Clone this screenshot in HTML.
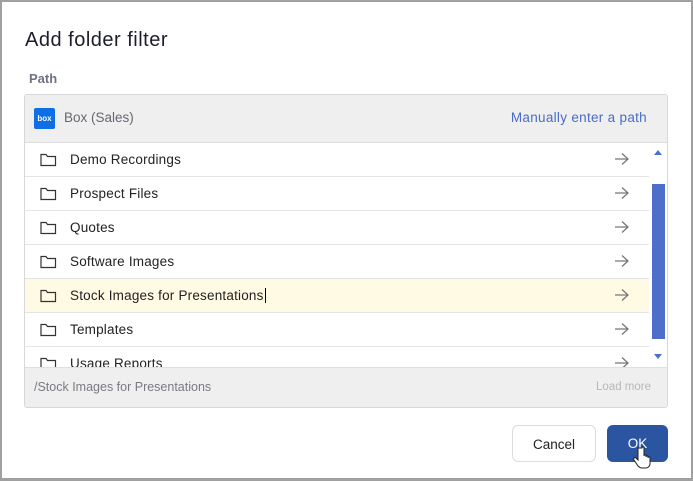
<!DOCTYPE html>
<html><head><style>
*{box-sizing:border-box;margin:0;padding:0}
body{width:693px;height:481px;background:#fff;font-family:"Liberation Sans",sans-serif;position:relative;overflow:hidden;border:2px solid #a0a0a0;border-bottom-width:3px}
.title{position:absolute;left:23px;top:27px;font-size:20px;color:#1d1d2b;letter-spacing:0.5px}
.path{position:absolute;left:27px;top:69px;font-size:13px;color:#6e7383;font-weight:bold}
.panel{position:absolute;left:22px;top:92px;width:644px;height:314px;border:1px solid #d8d8d8;border-radius:3px;overflow:hidden;background:#fff}
.hdr{height:48px;background:#efefef;border-bottom:1px solid #dedede;position:relative}
.logo{position:absolute;left:9px;top:13px;width:21px;height:21px;background:#0f6ee6;border-radius:2px;color:#fff;font-size:8px;text-align:center;line-height:21px;font-weight:bold}
.hname{position:absolute;left:39px;top:15px;font-size:13.5px;color:#666670}
.man{position:absolute;right:20px;top:15px;font-size:13.5px;color:#4a6cc8;letter-spacing:0.3px}
.row{position:absolute;left:0;width:624px;height:34px;border-bottom:1px solid #e4e4e4;font-size:13.5px;color:#222;letter-spacing:0.2px}
.row span{position:absolute;left:45px;top:9px}
.row svg.f{position:absolute;left:15px;top:10px}
.row svg.a{position:absolute;left:589px;top:9px}
.sel{background:#fffae3}
.foot{position:absolute;left:0;top:272px;width:100%;height:42px;background:#efefef;border-top:1px solid #e0e0e0}
.foot .p{position:absolute;left:9px;top:12px;font-size:12.5px;color:#7a7a82}
.foot .l{position:absolute;right:16px;top:13px;font-size:11.5px;color:#b8b8b8}
.thumb{position:absolute;left:627px;top:89px;width:13px;height:155px;background:#4d6fcb}
.btn{position:absolute;top:423px;height:37px;border-radius:6px;font-size:13.5px;text-align:center;line-height:37px}
</style></head><body>
<div class="title">Add folder filter</div>
<div class="path">Path</div>
<div class="panel">
 <div class="hdr"><div class="logo">box</div><div class="hname">Box (Sales)</div><div class="man">Manually enter a path</div></div>
 <div class="row" style="top:48px"><svg class="f" width="17" height="14"><path d="M1 1.5h5l1.5 2h8v9h-14.5z" fill="none" stroke="#333" stroke-width="1.2"/></svg><span>Demo Recordings</span><svg class="a" width="16" height="14"><path d="M1 7h13M8 1.5l6 5.5-6 5.5" fill="none" stroke="#777" stroke-width="1.3"/></svg></div>
 <div class="row" style="top:82px"><svg class="f" width="17" height="14"><path d="M1 1.5h5l1.5 2h8v9h-14.5z" fill="none" stroke="#333" stroke-width="1.2"/></svg><span>Prospect Files</span><svg class="a" width="16" height="14"><path d="M1 7h13M8 1.5l6 5.5-6 5.5" fill="none" stroke="#777" stroke-width="1.3"/></svg></div>
 <div class="row" style="top:116px"><svg class="f" width="17" height="14"><path d="M1 1.5h5l1.5 2h8v9h-14.5z" fill="none" stroke="#333" stroke-width="1.2"/></svg><span>Quotes</span><svg class="a" width="16" height="14"><path d="M1 7h13M8 1.5l6 5.5-6 5.5" fill="none" stroke="#777" stroke-width="1.3"/></svg></div>
 <div class="row" style="top:150px"><svg class="f" width="17" height="14"><path d="M1 1.5h5l1.5 2h8v9h-14.5z" fill="none" stroke="#333" stroke-width="1.2"/></svg><span>Software Images</span><svg class="a" width="16" height="14"><path d="M1 7h13M8 1.5l6 5.5-6 5.5" fill="none" stroke="#777" stroke-width="1.3"/></svg></div>
 <div class="row sel" style="top:184px"><svg class="f" width="17" height="14"><path d="M1 1.5h5l1.5 2h8v9h-14.5z" fill="none" stroke="#333" stroke-width="1.2"/></svg><span>Stock Images for Presentations<b style="display:inline-block;width:1px;height:15px;background:#000;vertical-align:-3px;margin-left:1px"></b></span><svg class="a" width="16" height="14"><path d="M1 7h13M8 1.5l6 5.5-6 5.5" fill="none" stroke="#777" stroke-width="1.3"/></svg></div>
 <div class="row" style="top:218px"><svg class="f" width="17" height="14"><path d="M1 1.5h5l1.5 2h8v9h-14.5z" fill="none" stroke="#333" stroke-width="1.2"/></svg><span>Templates</span><svg class="a" width="16" height="14"><path d="M1 7h13M8 1.5l6 5.5-6 5.5" fill="none" stroke="#777" stroke-width="1.3"/></svg></div>
 <div class="row" style="top:252px"><svg class="f" width="17" height="14"><path d="M1 1.5h5l1.5 2h8v9h-14.5z" fill="none" stroke="#333" stroke-width="1.2"/></svg><span>Usage Reports</span><svg class="a" width="16" height="14"><path d="M1 7h13M8 1.5l6 5.5-6 5.5" fill="none" stroke="#777" stroke-width="1.3"/></svg></div>
 <svg style="position:absolute;left:629px;top:55px" width="9" height="6"><path d="M0 5h8L4 0z" fill="#4d6fcb"/></svg>
 <div class="thumb"></div>
 <svg style="position:absolute;left:629px;top:259px" width="9" height="6"><path d="M0 0h8L4 5z" fill="#4d6fcb"/></svg>
 <div class="foot"><div class="p">/Stock Images for Presentations</div><div class="l">Load more</div></div>
</div>
<div class="btn" style="left:510px;width:84px;border:1px solid #dcdcdc;color:#222">Cancel</div>
<div class="btn" style="left:605px;width:61px;background:#2b55a0;color:#fff">OK</div>
<svg style="position:absolute;left:631px;top:444px" width="20" height="24"><path d="M5 2v12l-2-2c-1.5-1-3 .5-2 2l4 6c1 1 2 2 4 2h4c2 0 4-2 4-4v-6c0-1.5-2-1.5-2 0v-1c0-1.5-2-1.5-2 0v-1c0-1.5-2-1.5-2 0V2c0-1.5-2-1.5-2 0z" fill="#fff" stroke="#222" stroke-width="1"/></svg>
</body></html>
